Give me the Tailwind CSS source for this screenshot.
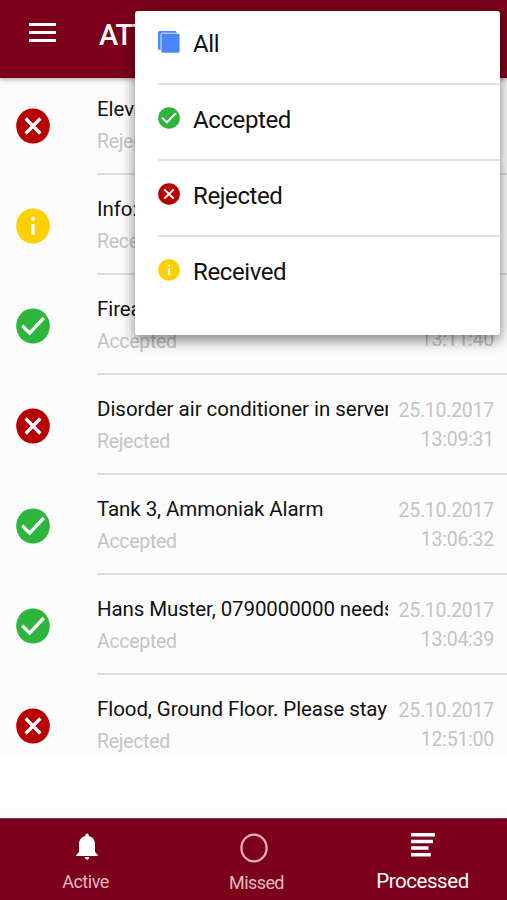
<!DOCTYPE html>
<html lang="en">
<head>
<meta charset="utf-8">
<title>Alarms</title>
<script src="https://cdn.jsdelivr.net/npm/@tailwindcss/browser@4"></script>
</head>
<body class="bg-white font-['Roboto',sans-serif]">
<svg class="hidden">
  <symbol id="no" viewBox="0 0 34 36" preserveAspectRatio="none"><ellipse cx="17" cy="18" rx="16.8" ry="17.6" fill="#b70000"/><path d="M9.700 10.500L24.300 25.500M24.300 10.500L9.700 25.500" stroke="#fff" stroke-width="3.300"/></symbol>
  <symbol id="ok" viewBox="0 0 34 36" preserveAspectRatio="none"><ellipse cx="17" cy="18" rx="16.800" ry="17.600" fill="#2db63c"/><path d="M6.300 17.700L13.600 25.100L27.700 10" fill="none" stroke="#fff" stroke-width="3.300"/></symbol>
  <symbol id="info" viewBox="0 0 34 36" preserveAspectRatio="none"><ellipse cx="17" cy="18" rx="16.800" ry="17.600" fill="#fdd100"/><path d="M15.300 9.300h3.400v3.500h-3.400zM15.300 16h3.400v10.700h-3.400z" fill="#fff"/></symbol>
</svg>
<div class="relative flex h-[900px] w-[507px] flex-col overflow-hidden bg-white">
  <header class="relative z-10 flex h-[78px] shrink-0 items-start bg-[#7c001b] shadow-[0_1px_5px_rgba(0,0,0,0.4)]">
    <svg class="mt-[22px] ml-[29px] h-5 w-[27px]" viewBox="0 0 27 20" fill="#fff"><path d="M0 1h27v3H0zM0 9h27v3H0zM0 17h27v3H0z"/></svg>
    <h1 class="mt-[18px] ml-[43px] text-[29px] leading-[34px] font-medium tracking-[-1px] whitespace-nowrap text-white">ATT</h1>
  </header>
  <main class="-mt-[3.200px] flex h-[683px] shrink-0 flex-col bg-[#fcfcfc]">
    <section class="flex h-[100.100px] shrink-0 pl-4">
      <svg class="mt-[33px] h-9 w-[34px] shrink-0"><use href="#no"/></svg>
      <div class="ml-[47px] flex min-w-0 flex-1 border-b-2 border-[#dedede]">
        <div class="w-[291px] shrink-0 overflow-hidden whitespace-nowrap"><p class="mt-[22px] text-[20.500px] leading-6 tracking-[-0.080px] text-[#111]">Elevator</p><p class="mt-[9px] text-[19.500px] leading-6 tracking-[-0.300px] text-[#c4c4c4]">Rejected</p></div>
      </div>
    </section>
    <section class="flex h-[100.100px] shrink-0 pl-4">
      <svg class="mt-[33px] h-9 w-[34px] shrink-0"><use href="#info"/></svg>
      <div class="ml-[47px] flex min-w-0 flex-1 border-b-2 border-[#dedede]">
        <div class="w-[291px] shrink-0 overflow-hidden whitespace-nowrap"><p class="mt-[22px] text-[20.500px] leading-6 tracking-[-0.080px] text-[#111]">Info:</p><p class="mt-[9px] text-[19.500px] leading-6 tracking-[-0.300px] text-[#c4c4c4]">Received</p></div>
      </div>
    </section>
    <section class="flex h-[100.100px] shrink-0 pl-4">
      <svg class="mt-[33px] h-9 w-[34px] shrink-0"><use href="#ok"/></svg>
      <div class="ml-[47px] flex min-w-0 flex-1 border-b-2 border-[#dedede]">
        <div class="w-[291px] shrink-0 overflow-hidden whitespace-nowrap"><p class="mt-[22px] text-[20.500px] leading-6 tracking-[-0.080px] text-[#111]">Firealarm</p><p class="mt-[9px] text-[19.500px] leading-6 tracking-[-0.300px] text-[#c4c4c4]">Accepted</p></div>
        <div class="mt-[21px] mr-[13px] flex-1 text-right text-[19.500px] leading-[29px] tracking-[-0.250px] text-[#c4c4c4]"><p>25.10.2017</p><p>13:11:40</p></div>
      </div>
    </section>
    <section class="flex h-[100.100px] shrink-0 pl-4">
      <svg class="mt-[33px] h-9 w-[34px] shrink-0"><use href="#no"/></svg>
      <div class="ml-[47px] flex min-w-0 flex-1 border-b-2 border-[#dedede]">
        <div class="w-[291px] shrink-0 overflow-hidden whitespace-nowrap"><p class="mt-[22px] text-[20.500px] leading-6 tracking-[-0.040px] text-[#111]">Disorder air conditioner in server</p><p class="mt-[9px] text-[19.500px] leading-6 tracking-[-0.300px] text-[#c4c4c4]">Rejected</p></div>
        <div class="mt-[21px] mr-[13px] flex-1 text-right text-[19.500px] leading-[29px] tracking-[-0.250px] text-[#c4c4c4]"><p>25.10.2017</p><p>13:09:31</p></div>
      </div>
    </section>
    <section class="flex h-[100.100px] shrink-0 pl-4">
      <svg class="mt-[33px] h-9 w-[34px] shrink-0"><use href="#ok"/></svg>
      <div class="ml-[47px] flex min-w-0 flex-1 border-b-2 border-[#dedede]">
        <div class="w-[291px] shrink-0 overflow-hidden whitespace-nowrap"><p class="mt-[22px] text-[20.500px] leading-6 tracking-[-0.080px] text-[#111]">Tank 3, Ammoniak Alarm</p><p class="mt-[9px] text-[19.500px] leading-6 tracking-[-0.300px] text-[#c4c4c4]">Accepted</p></div>
        <div class="mt-[21px] mr-[13px] flex-1 text-right text-[19.500px] leading-[29px] tracking-[-0.250px] text-[#c4c4c4]"><p>25.10.2017</p><p>13:06:32</p></div>
      </div>
    </section>
    <section class="flex h-[100.100px] shrink-0 pl-4">
      <svg class="mt-[33px] h-9 w-[34px] shrink-0"><use href="#ok"/></svg>
      <div class="ml-[47px] flex min-w-0 flex-1 border-b-2 border-[#dedede]">
        <div class="w-[291px] shrink-0 overflow-hidden whitespace-nowrap"><p class="mt-[22px] text-[20.500px] leading-6 tracking-[-0.100px] text-[#111]">Hans Muster, 0790000000 needs</p><p class="mt-[9px] text-[19.500px] leading-6 tracking-[-0.300px] text-[#c4c4c4]">Accepted</p></div>
        <div class="mt-[21px] mr-[13px] flex-1 text-right text-[19.500px] leading-[29px] tracking-[-0.250px] text-[#c4c4c4]"><p>25.10.2017</p><p>13:04:39</p></div>
      </div>
    </section>
    <section class="flex h-[82px] shrink-0 pl-4">
      <svg class="mt-[33px] h-9 w-[34px] shrink-0"><use href="#no"/></svg>
      <div class="ml-[47px] flex min-w-0 flex-1">
        <div class="w-[291px] shrink-0 overflow-hidden whitespace-nowrap"><p class="mt-[22px] text-[20.500px] leading-6 tracking-[-0.080px] text-[#111]">Flood, Ground Floor. Please stay</p><p class="mt-[9px] text-[19.500px] leading-6 tracking-[-0.300px] text-[#c4c4c4]">Rejected</p></div>
        <div class="mt-[21px] mr-[13px] flex-1 text-right text-[19.500px] leading-[29px] tracking-[-0.250px] text-[#c4c4c4]"><p>25.10.2017</p><p>12:51:00</p></div>
      </div>
    </section>
  </main>
  <div class="mt-auto h-[10px] bg-[#fcfcfc]"></div>
  <nav class="flex h-[82px] shrink-0 border-t border-[#963047] bg-[#7c001b] text-[#e3b9c1]">
    <div class="flex w-[171px] flex-col items-center">
      <svg class="mt-[14px] ml-[2px] h-[27px] w-[22px]" viewBox="0 0 22 27" fill="#fff"><path d="M9.300 1.500Q11 -.5 12.700 1.500V3C17 4 19 7.500 19 11V19L21.800 22V23H.2V22L3 19V11C3 7.500 5 4 9.300 3ZM8.800 24H13.200Q13 26.700 11 26.700Q9 26.700 8.800 24Z"/></svg>
      <p class="mt-[10px] text-[18px] leading-6 tracking-[-0.500px]">Active</p>
    </div>
    <div class="flex w-[171px] flex-col items-center">
      <svg class="mt-[14px] -ml-[5px] h-[30px] w-[28px]" viewBox="0 0 28 30"><ellipse cx="14" cy="15" rx="12.600" ry="13.400" fill="none" stroke="#e3aeb8" stroke-width="2.300"/></svg>
      <p class="mt-[8px] text-[18px] leading-6 tracking-[-0.600px]">Missed</p>
    </div>
    <div class="mr-[4px] flex flex-1 flex-col items-center text-white">
      <svg class="mt-[14px] h-[24px] w-[24px]" viewBox="0 0 24 24" fill="#fff"><path d="M0 0h24v3.400H0zM0 6.800h22v3.400H0zM0 13.300h17.500v3.400H0zM0 20h19.800v3.400H0z"/></svg>
      <p class="mt-[12px] text-[20.500px] leading-6 tracking-[-0.450px]">Processed</p>
    </div>
  </nav>
  <div class="absolute top-[11px] left-[135px] z-20 flex h-[324px] w-[365px] flex-col rounded-[3px] bg-white pl-[23px] text-[24px] leading-7 tracking-[-0.400px] text-[#111] shadow-[0_5px_14px_rgba(0,0,0,0.5)]">
    <div class="flex h-[74px] items-start border-b-2 border-[#e2e2e2]">
      <svg class="mt-5 h-[22px] w-[22px]" viewBox="0 0 22 22"><rect x="0" y="0" width="18.500" height="19" rx="1.500" fill="#4a86f7"/><rect x="3" y="2.200" width="19" height="20" rx="2" fill="#4a86f7" stroke="#fff" stroke-width=".8"/></svg>
      <p class="mt-[19px] ml-[13px]">All</p>
    </div>
    <div class="flex h-[76px] items-start border-b-2 border-[#e2e2e2]"><svg class="mt-[22px] h-[22px] w-[22px]"><use href="#ok"/></svg><p class="mt-[21px] ml-[13px]">Accepted</p></div>
    <div class="flex h-[76px] items-start border-b-2 border-[#e2e2e2]"><svg class="mt-[22px] h-[22px] w-[22px]"><use href="#no"/></svg><p class="mt-[21px] ml-[13px]">Rejected</p></div>
    <div class="flex items-start"><svg class="mt-[22px] h-[22px] w-[22px]"><use href="#info"/></svg><p class="mt-[21px] ml-[13px]">Received</p></div>
  </div>
</div>
</body>
</html>
